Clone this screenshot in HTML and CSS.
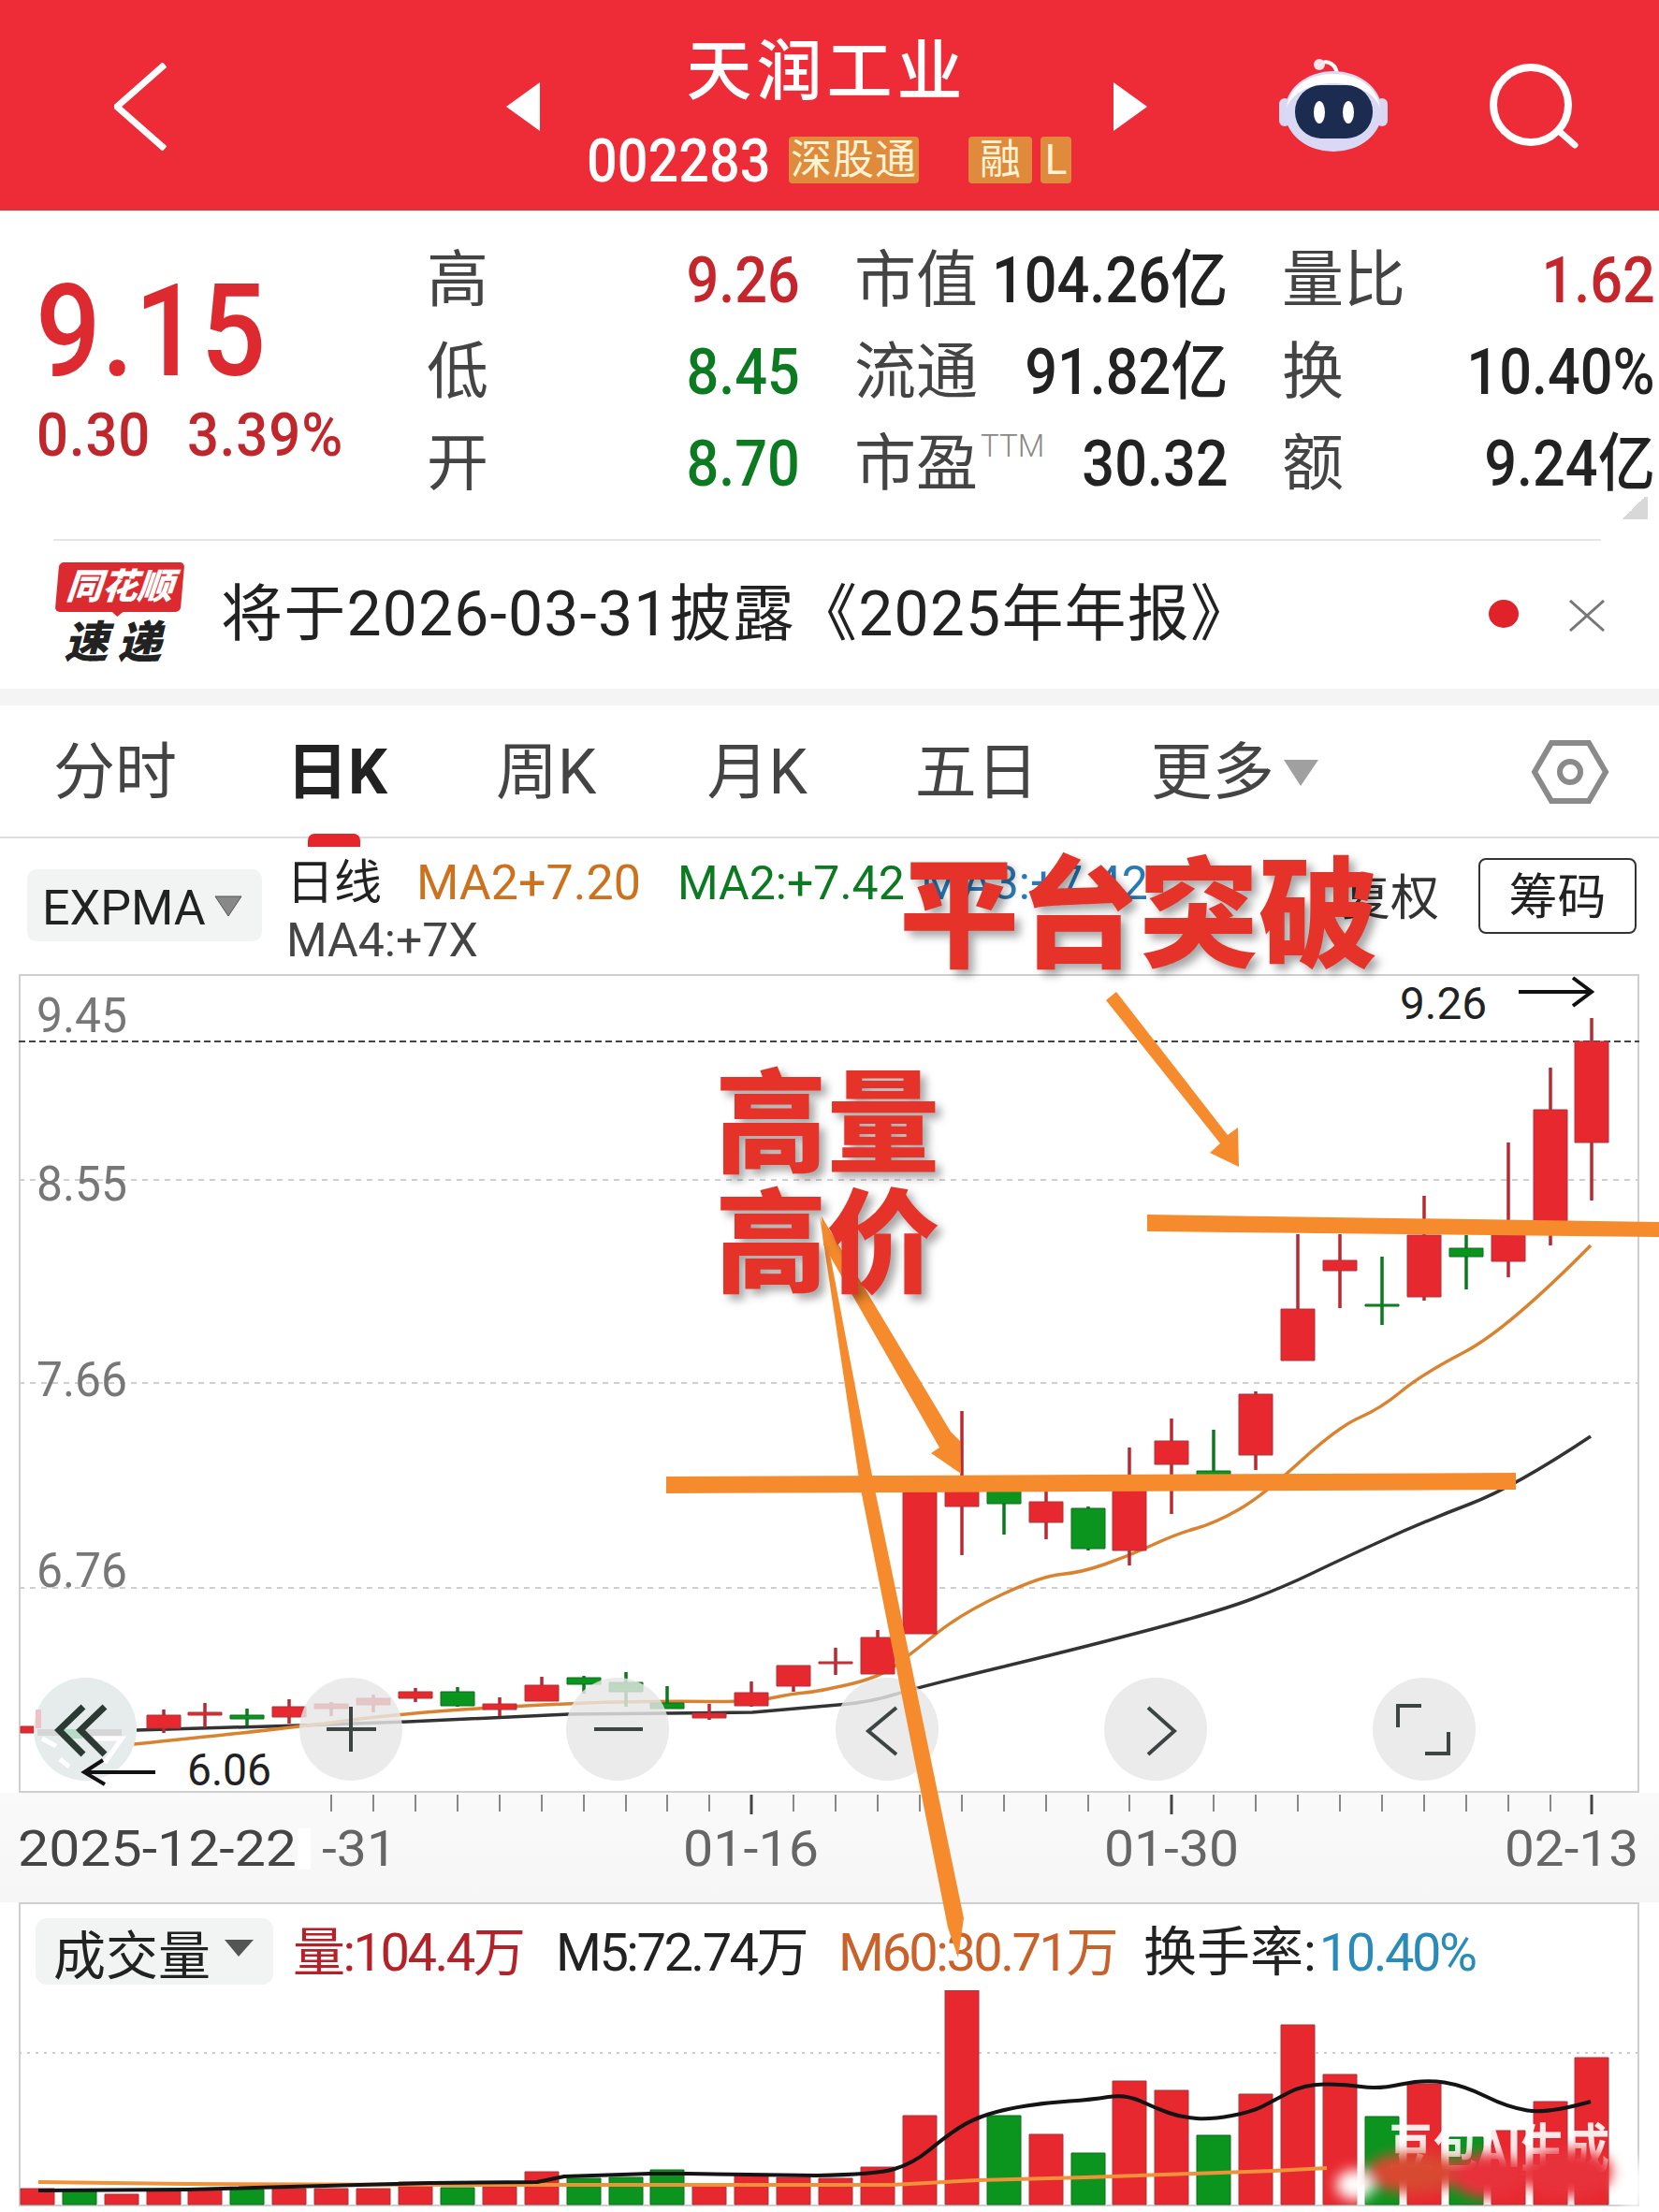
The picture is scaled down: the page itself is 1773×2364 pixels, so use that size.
FILE: index.html
```html
<!DOCTYPE html>
<html lang="zh-CN">
<head>
<meta charset="utf-8">
<title>天润工业</title>
<link rel="stylesheet" href="styles.css">
</head>
<body>
<div class="page">
  <header class="top">
    <svg class="ic-back" viewBox="122 66 56 94"><path d="M176 68 125 113 176 158" class="ws"/></svg>
    <svg class="ic-tri" viewBox="0 0 36 52"><path d="M36 0V52L0 26z" class="wf"/></svg>
    <div class="top-mid">
      <div class="title">天润工业</div>
      <div class="code-row">
        <span class="code">002283</span>
        <span class="tag tag-sgt">深股通</span>
        <span class="tag tag-rong">融</span>
        <span class="tag tag-l">L</span>
      </div>
    </div>
    <svg class="ic-tri" viewBox="0 0 36 52"><path d="M0 0V52L36 26z" class="wf"/></svg>
    <svg class="ic-robot" viewBox="1366 60 122 108">
      <path d="M1411 72C1414 64 1428 66 1430 80" class="ant"/>
      <circle cx="1411" cy="70" r="6" class="ant-b"/>
      <rect x="1368" y="106" width="12" height="30" rx="6" class="rb-ear"/>
      <rect x="1472" y="106" width="12" height="30" rx="6" class="rb-ear"/>
      <ellipse cx="1426" cy="120" rx="52" ry="43" class="rb-out"/>
      <path d="M1376 116C1380 92 1402 80 1426 80C1450 80 1472 92 1476 116C1470 100 1450 90 1426 90C1402 90 1382 100 1376 116z" class="wf"/>
      <rect x="1385" y="92" width="83" height="57" rx="28" class="rb-visor"/>
      <ellipse cx="1411" cy="121" rx="6" ry="12" class="wf"/>
      <ellipse cx="1442" cy="121" rx="6" ry="12" class="wf"/>
    </svg>
    <svg class="ic-search" viewBox="1588 68 100 96"><circle cx="1637" cy="115" r="40" class="ws2"/><path d="M1667 143 1684 158" class="ws3"/></svg>
  </header>

  <section class="quote">
    <div class="price">
      <div class="price-now">9.15</div>
      <div class="price-chg"><span>0.30</span><span>3.39%</span></div>
    </div>
    <div class="stats">
      <div class="cell"><span class="lbl">高</span><span class="val red">9.26</span></div>
      <div class="cell"><span class="lbl">市值</span><span class="val">104.26亿</span></div>
      <div class="cell"><span class="lbl">量比</span><span class="val red">1.62</span></div>
      <div class="cell"><span class="lbl">低</span><span class="val grn">8.45</span></div>
      <div class="cell"><span class="lbl">流通</span><span class="val">91.82亿</span></div>
      <div class="cell"><span class="lbl">换</span><span class="val">10.40%</span></div>
      <div class="cell"><span class="lbl">开</span><span class="val grn">8.70</span></div>
      <div class="cell"><span class="lbl">市盈<sup class="ttm">TTM</sup></span><span class="val">30.32</span></div>
      <div class="cell"><span class="lbl">额</span><span class="val">9.24亿</span></div>
    </div>
    <span class="corner"></span>
  </section>

  <div class="news-wrap">
    <div class="news">
      <div class="logo">
        <div class="logo-tag"><span class="logo-tag-t">同花顺</span></div>
        <div class="logo-sub">速递</div>
      </div>
      <div class="news-text">将于2026-03-31披露《2025年年报》</div>
      <span class="news-dot"></span>
      <svg class="news-x" viewBox="0 0 40 34"><path d="M2 1 38 33M38 1 2 33" class="gs"/></svg>
    </div>
  </div>
  <div class="sep"></div>

  <nav class="tabs">
    <span class="tab t1">分时</span>
    <span class="tab t2 on">日K</span>
    <span class="tab t3">周K</span>
    <span class="tab t4">月K</span>
    <span class="tab t5">五日</span>
    <span class="tab t6">更多</span>
    <svg class="tab-tri" viewBox="0 0 37 28"><path d="M0 0H37L18 28z" class="graytri"/></svg>
    <svg class="hex" viewBox="1636 790 84 70"><path d="M1640 825 1658 794H1698L1716 825 1698 856H1658z" class="hexs"/><circle cx="1678" cy="825" r="11" class="hexs"/></svg>
  </nav>

  <div class="ind">
    <div class="expma"><span class="expma-t">EXPMA</span><svg class="expma-tri" viewBox="0 0 32 25"><path d="M2 2H30L16 23z" class="tri2"/></svg></div>
    <div class="legend">
      <div class="leg-line">
        <span class="leg-a">日线</span>
        <span class="leg-b">MA2+7.20</span>
        <span class="leg-c">MA2:+7.42</span>
        <span class="leg-d">MA3:+7.42</span>
      </div>
      <div class="leg-line2">MA4:+7X</div>
    </div>
    <span class="fq">复权</span>
    <span class="chip">筹码</span>
  </div>

  <div class="chart">
    <svg class="chart-svg" viewBox="20 1041 1732 875">
      <path d="M20 1113H1752" class="grid-d"/>
      <path d="M20 1261H1752M20 1478H1752M20 1697H1752" class="grid-l"/>
      <path d="M146 1849 321 1844 436 1840 608 1832 804 1830Q873 1824 901.5 1821.5Q930 1819 956 1811Q982 1803 1071 1781.5Q1160 1760 1231.5 1741Q1303 1722 1337.5 1709Q1372 1696 1401 1682Q1430 1668 1476 1647Q1522 1626 1570.5 1607.5Q1619 1589 1700 1535" class="ma-k"/>
      <path d="M143 1864Q310 1847 370 1839Q430 1831 519 1825.5Q608 1820 660 1819Q712 1818 758 1818.5Q804 1819 825.5 1814.5Q847 1810 860 1809Q873 1808 906 1800.5Q939 1793 956 1780.5Q973 1768 1000.5 1746Q1028 1724 1071 1704Q1114 1684 1134 1682.5Q1154 1681 1180 1672Q1206 1663 1232 1651Q1258 1639 1278 1633.5Q1298 1628 1323.5 1613.5Q1349 1599 1389.5 1562Q1430 1525 1453 1515Q1476 1505 1497.5 1487Q1519 1469 1565 1445Q1611 1421 1700 1331" class="ma-o"/>

      <path class="wick-r" d="M175 1827V1852M219 1820V1846M309 1816V1842M354 1819V1834M399 1811V1830M444 1804V1819M534 1814V1834M579 1792V1818M758 1821V1838M803 1797V1824M848 1780V1808M893 1761V1790M938 1742V1789M1028 1508V1662M1118 1592V1645M1207 1547V1673M1252 1516V1618M1342 1487V1571M1387 1319V1454M1432 1319V1398M1522 1278V1390M1612 1221V1365M1657 1141V1331M1701 1088V1283"/>
      <path class="wick-g" d="M264 1826V1844M489 1803V1824M624 1791V1810M669 1787V1824M713 1802V1826M1073 1580V1640M1163 1610V1657M1297 1528V1579M1477 1343V1416M1567 1320V1378"/>
      <path class="body-r" d="M157 1833h36v14h-36zM201 1830h36v3h-36zM291 1824h36v11h-36zM336 1821h36v5h-36zM381 1815h36v7h-36zM426 1808h36v7h-36zM516 1821h36v6h-36zM561 1801h36v17h-36zM740 1831h36v5h-36zM785 1809h36v14h-36zM830 1780h36v22h-36zM875 1776h36v2h-36zM920 1750h36v39h-36zM965 1590h36v156h-36zM1010 1580h36v30h-36zM1100 1605h36v22h-36zM1189 1590h36v67h-36zM1234 1540h36v25h-36zM1324 1490h36v65h-36zM1369 1399h36v55h-36zM1414 1347h36v11h-36zM1504 1320h36v66h-36zM1594 1320h36v28h-36zM1639 1186h36v124h-36zM1683 1113h36v108h-36zM22 1845h14v7H22z"/>
      <path class="body-g" d="M246 1833h36v4h-36zM471 1808h36v15h-36zM606 1793h36v7h-36zM651 1798h36v10h-36zM695 1820h36v6h-36zM1055 1582h36v25h-36zM1145 1612h36v43h-36zM1279 1572h36v7h-36zM1459 1394h36v2h-36zM1549 1334h36v9h-36z"/>

      <circle cx="91" cy="1848" r="55" class="fab fab-l"/>
      <circle cx="375" cy="1848" r="55" class="fab"/>
      <circle cx="660" cy="1848" r="55" class="fab"/>
      <circle cx="948" cy="1848" r="55" class="fab"/>
      <circle cx="1235" cy="1848" r="55" class="fab"/>
      <circle cx="1522" cy="1848" r="55" class="fab"/>
      <path d="M38 1827h6v20h-6z" class="ghost-r"/>
      <path d="M40 1848h90v7H40z" class="ghost-k"/>
      <path d="M66 1848h22v10H66z" class="ghost-g"/>
      <path d="M45 1858 60 1866M64 1880 74 1888M100 1858H130L112 1884" class="ghost-l"/>
      <path d="M89 1824 63 1849 89 1875M112 1824 86 1849 112 1875" class="fab-c"/>
      <path d="M349 1848H402M375 1824V1872" class="fab-i"/>
      <path d="M635 1848H687" class="fab-i"/>
      <path d="M958 1825 928 1850 958 1875" class="fab-i"/>
      <path d="M1227 1825 1255 1850 1227 1875" class="fab-i"/>
      <path d="M1519 1823H1494V1846M1523 1874H1548V1851" class="fab-i"/>

      <text x="39" y="1103" textLength="97" lengthAdjust="spacingAndGlyphs" class="ax">9.45</text>
      <text x="39" y="1283" textLength="97" lengthAdjust="spacingAndGlyphs" class="ax">8.55</text>
      <text x="39" y="1492" textLength="97" lengthAdjust="spacingAndGlyphs" class="ax">7.66</text>
      <text x="39" y="1696" textLength="97" lengthAdjust="spacingAndGlyphs" class="ax">6.76</text>
      <text x="1496" y="1089" textLength="93" lengthAdjust="spacingAndGlyphs" class="mk">9.26</text>
      <text x="200" y="1908" textLength="90" lengthAdjust="spacingAndGlyphs" class="mk">6.06</text>
      <path d="M1623 1060H1700M1681 1045 1701 1060 1681 1075" class="arr"/>
      <path d="M166 1894H90M110 1881 90 1894 112 1907" class="arr"/>
    </svg>
  </div>

  <div class="axis">
    <svg class="axis-svg" viewBox="0 1916 1773 117">
      <path class="tick" d="M354 1918V1936M399 1918V1936M444 1918V1936M489 1918V1936M534 1918V1936M579 1918V1936M624 1918V1936M669 1918V1936M713 1918V1936M758 1918V1936M848 1918V1936M893 1918V1936M938 1918V1936M983 1918V1936M1028 1918V1936M1073 1918V1936M1118 1918V1936M1163 1918V1936M1207 1918V1936M1297 1918V1936M1342 1918V1936M1387 1918V1936M1432 1918V1936M1477 1918V1936M1522 1918V1936M1567 1918V1936M1612 1918V1936M1657 1918V1936"/>
      <path class="tick-m" d="M803 1918V1939M1252 1918V1939M1701 1918V1939"/>
      <rect x="318" y="1954" width="14" height="44" class="axis-mask"/>
      <text x="19" y="1994" textLength="298" lengthAdjust="spacingAndGlyphs" class="dt dt-d">2025-12-22</text>
      <text x="344" y="1994" textLength="80" lengthAdjust="spacingAndGlyphs" class="dt">-31</text>
      <text x="730" y="1994" textLength="145" lengthAdjust="spacingAndGlyphs" class="dt">01-16</text>
      <text x="1180" y="1994" textLength="144" lengthAdjust="spacingAndGlyphs" class="dt">01-30</text>
      <text x="1608" y="1994" textLength="143" lengthAdjust="spacingAndGlyphs" class="dt">02-13</text>
    </svg>
  </div>

  <div class="vol">
    <div class="vol-head">
      <div class="vol-sel"><span>成交量</span><svg class="vol-tri" viewBox="0 0 31 18"><path d="M0 0H31L15 18z" class="tri3"/></svg></div>
      <span class="vi v-r">量:104.4万</span>
      <span class="vi v-k">M5:72.74万</span>
      <span class="vi v-o">M60:30.71万</span>
      <span class="vi v-k v-h"><span class="v-hl">换手率:</span><span class="v-b">10.40%</span></span>
    </div>
    <svg class="vol-svg" viewBox="20 2127 1732 231">
      <defs><filter id="blur" x="-20%" y="-40%" width="140%" height="180%"><feGaussianBlur stdDeviation="7"/></filter></defs>
      <path d="M20 2194H1752" class="grid-dot"/>
      <path class="body-r" d="M22 2339h36v17H22zM112 2345h36v11h-36zM157 2342h36v14h-36zM201 2339h36v17h-36zM291 2339h36v17h-36zM336 2339h36v17h-36zM381 2339h36v17h-36zM426 2332h36v24h-36zM516 2337h36v19h-36zM561 2321h36v35h-36zM740 2336h36v20h-36zM785 2324h36v32h-36zM830 2327h36v29h-36zM875 2328h36v28h-36zM920 2316h36v40h-36zM965 2261h36v95h-36zM1010 2127h36v229h-36zM1100 2281h36v75h-36zM1189 2224h36v132h-36zM1234 2234h36v122h-36zM1324 2238h36v118h-36zM1369 2164h36v192h-36zM1414 2217h36v139h-36zM1504 2227h36v129h-36zM1594 2277h36v79h-36zM1639 2246h36v110h-36zM1683 2199h36v157h-36z"/>
      <path class="body-g" d="M67 2342h36v14H67zM246 2340h36v16h-36zM471 2338h36v18h-36zM606 2328h36v28h-36zM651 2327h36v29h-36zM695 2319h36v37h-36zM1055 2261h36v95h-36zM1145 2301h36v55h-36zM1279 2282h36v74h-36zM1459 2262h36v94h-36zM1549 2284h36v72h-36z"/>
      <path d="M41 2332 201 2334 517 2335 900 2335 953 2335 1045 2330 1160 2327 1275 2323 1361 2320 1418 2317" class="v-ma-o"/>
      <path d="M41 2341 201 2340 459 2333 574 2332 603 2326 695 2323 735 2323 873 2325Q936 2324 956 2318Q976 2312 993.5 2297.5Q1011 2283 1025 2274Q1039 2265 1056.5 2259.5Q1074 2254 1097 2250.5Q1120 2247 1143 2245.5Q1166 2244 1184.5 2241Q1203 2238 1219 2245.5Q1235 2253 1249 2258Q1263 2263 1279 2264Q1295 2265 1316.5 2261Q1338 2257 1349.5 2251Q1361 2245 1377 2236.5Q1393 2228 1414.5 2227.5Q1436 2227 1454.5 2230Q1473 2233 1497.5 2227.5Q1522 2222 1543.5 2225.5Q1565 2229 1588 2240.5Q1611 2252 1632.5 2255.5Q1654 2259 1700 2246" class="v-ma-k"/>
      <text x="1484" y="2316" textLength="236" lengthAdjust="spacingAndGlyphs" class="wm">豆包AI生成</text>
      <g filter="url(#blur)">
        <ellipse cx="1448" cy="2335" rx="20" ry="16" class="halo"/>
        <ellipse cx="1510" cy="2322" rx="50" ry="22" class="blob-g"/>
        <ellipse cx="1590" cy="2325" rx="40" ry="24" class="blob-r"/>
        <ellipse cx="1675" cy="2322" rx="50" ry="26" class="blob-r"/>
        <ellipse cx="1745" cy="2335" rx="14" ry="28" class="halo"/>
      </g>
    </svg>
  </div>

  <svg class="marks" viewBox="0 0 1773 2364">
    <path class="mark" d="M1226 1298 1773 1306V1322L1226 1316z"/>
    <path class="mark" d="M712 1578 1620 1574V1592L712 1596z"/>
    <path class="mark" d="M1182 1069 1193 1060 1312 1213 1323 1205 1324 1247 1293 1232 1304 1222z"/>
    <path class="mark" d="M878 1300 1016 1530 1026 1540 1027 1575 995 1553 1004 1547 880 1330z"/>
    <path class="mark" d="M876 1300 919 1587 1013 2060 1024 2092 1030 2050 934 1587 885 1330z"/>
  </svg>
  <div class="note note-a">平台突破</div>
  <div class="note note-b">高量<br>高价</div>
</div>
</body>
</html>
```

FILE: styles.css
```css
* { box-sizing: border-box; }
html, body { margin: 0; padding: 0; background: #fff; }
body { font-family: Roboto, "Noto Sans CJK SC", sans-serif; color: #222; }
.page { position: relative; width: 1773px; height: 2364px; overflow: hidden; }
svg { display: block; flex: none; }

/* header */
.top { height: 225px; background: #ee2c38; display: flex; align-items: center; color: #fff; box-shadow: inset 0 -2px 0 #d33; }
.ws { fill: none; stroke: #fff; stroke-width: 7; }
.ws2 { fill: none; stroke: #fff; stroke-width: 8; }
.ws3 { fill: none; stroke: #fff; stroke-width: 7; stroke-linecap: round; }
.wf { fill: #fff; }
.ic-back { width: 56px; height: 94px; margin-left: 122px; margin-right: 363px; position: relative; top: 1px; }
.ic-tri { width: 36px; height: 52px; position: relative; top: 1px; }
.top-mid { width: 613px; height: 225px; padding-top: 37px; }
.title { text-align: center; font-size: 70px; line-height: 80px; font-weight: 500; letter-spacing: 5px; }
.code-row { display: flex; align-items: center; margin-top: 29px; margin-left: 50px; height: 50px; }
.code { display: inline-block; font-size: 64px; height: 50px; line-height: 54px; font-weight: 500; transform: scaleX(.9); transform-origin: left; width: 216px; }
.tag { background: #e08a3c; color: #fff3d6; font-size: 44px; line-height: 50px; border-radius: 4px; height: 50px; text-align: center; overflow: hidden; }
.tag-sgt { width: 139px; font-size: 44px; letter-spacing: 1px; }
.tag-rong { width: 68px; margin-left: 53px; }
.tag-l { width: 33px; margin-left: 9px; }
.ic-robot { width: 122px; height: 108px; margin-left: 139px; }
.ant { fill: none; stroke: #fff; stroke-width: 4; }
.ant-b { fill: #f6e6ea; }
.rb-ear { fill: #d8d8f2; }
.rb-out { fill: #d9d9f6; }
.rb-visor { fill: #1c2b50; }
.ic-search { width: 100px; height: 96px; margin-left: 100px; }

/* quote */
.quote { position: relative; height: 351px; padding-top: 26px; display: flex; }
.price { width: 456px; padding-left: 38px; padding-top: 45px; }
.price-now { font-size: 138px; line-height: 116px; font-weight: 500; transform: scaleX(.89); transform-origin: left; letter-spacing: 1px; color: #dc2a30; }
.price-chg { display: flex; gap: 42px; font-size: 65px; line-height: 70px; margin-top: 18px; margin-left: 1px; font-weight: 500; letter-spacing: 1px; transform: scaleX(.92); transform-origin: left; color: #c0272d; white-space: nowrap; }
.stats { display: grid; grid-template-columns: repeat(3, 399px); grid-auto-rows: 98px; column-gap: 58px; }
.cell { display: flex; justify-content: space-between; align-items: center; }
.lbl { font-size: 66px; color: #444; line-height: 80px; white-space: nowrap; }
.val { font-size: 68px; line-height: 80px; margin-left: -30px; color: #222; font-weight: 500; white-space: nowrap; transform: scaleX(.9); transform-origin: right; }
.red { color: #c4262c; }
.grn { color: #0b7a20; }
.ttm { font-size: 33px; color: #888; vertical-align: 30px; line-height: 0; font-weight: 300; margin-left: 3px; }
.corner { position: absolute; right: 12px; top: 306px; width: 30px; height: 24px; background: linear-gradient(135deg, transparent 50%, #d8d8d8 50%); }

/* news */
.news-wrap { padding: 0 62px 0 57px; }
.news { height: 160px; border-top: 2px solid #e6e6e6; display: flex; align-items: center; position: relative; }
.logo { width: 141px; display: flex; flex-direction: column; align-items: center; }
.logo-tag { position: relative; width: 134px; height: 53px; background: #dc2b30; border-radius: 5px; color: #fff; text-align: center; transform: skewX(-5deg); }
.logo-tag::after { content: ""; position: absolute; left: 60px; bottom: -5px; width: 14px; height: 6px; background: #dc2b30; clip-path: polygon(0 0, 100% 0, 50% 100%); }
.logo-tag-t { font-size: 38px; line-height: 53px; font-weight: 900; font-style: italic; }
.logo-sub { font-size: 47px; line-height: 54px; font-weight: 900; font-style: italic; color: #222; margin-top: 6px; letter-spacing: 10px; margin-left: -4px; }
.news-text { margin-left: 38px; font-size: 66px; line-height: 1; color: #222; white-space: nowrap; letter-spacing: 1.2px; }
.news-dot { width: 32px; height: 30px; border-radius: 50%; background: #e0222a; position: absolute; left: 1534px; top: 63px; }
.news-x { width: 40px; height: 34px; position: absolute; left: 1619px; top: 63px; }
.gs { fill: none; stroke: #777; stroke-width: 3; }
.sep { height: 18px; background: #f4f4f4; }

/* tabs */
.tabs { position: relative; height: 142px; border-bottom: 2px solid #dedede; display: flex; align-items: center; padding-left: 57px; padding-top: 3px; }
.tab { font-size: 66px; line-height: 1; color: #444; position: relative; white-space: nowrap; }
.t2 { margin-left: 117px; }
.t3 { margin-left: 116px; }
.t4 { margin-left: 118px; }
.t5 { margin-left: 115px; }
.t6 { margin-left: 120px; }
.on { font-weight: 700; color: #222; }
.on::after { content: ""; position: absolute; left: 23px; bottom: -46px; width: 56px; height: 14px; background: #e5252a; border-radius: 7px 7px 0 0; }
.tab-tri { width: 37px; height: 28px; margin-left: 10px; }
.graytri { fill: #a0a0a0; }
.hex { width: 84px; height: 70px; position: absolute; left: 1636px; top: 36px; }
.hexs { fill: none; stroke: #8a8a8a; stroke-width: 6; }

/* indicators */
.ind { height: 145px; display: flex; align-items: flex-start; padding-left: 29px; position: relative; }
.expma { margin-top: 33px; width: 251px; height: 77px; background: #f2f3f3; border-radius: 10px; display: flex; align-items: center; padding-left: 16px; font-size: 52px; color: #222; }
.expma-t { line-height: 60px; padding-top: 6px; }
.expma-tri { width: 32px; height: 25px; margin-left: 8px; margin-top: 2px; }
.tri2 { fill: #888; stroke: #555; stroke-width: 1; }
.legend { margin-left: 26px; padding-top: 18px; }
.leg-line { display: flex; font-size: 50px; line-height: 60px; white-space: nowrap; height: 60px; }
.leg-a { width: 139px; color: #222; font-size: 51px; }
.leg-b { width: 279px; color: #cc721e; font-size: 52px; }
.leg-c { width: 260px; color: #0b7a20; }
.leg-d { color: #2a7ab8; }
.leg-line2 { font-size: 50px; line-height: 62px; color: #444; }
.fq { margin-left: auto; margin-right: 42px; margin-top: 35px; font-size: 52px; line-height: 60px; color: #333; }
.chip { margin-top: 21px; margin-right: 24px; width: 169px; height: 81px; border: 2px solid #333; border-radius: 8px; text-align: center; font-size: 52px; line-height: 81px; color: #222; }

/* chart */
.chart { margin-left: 20px; width: 1732px; height: 875px; box-shadow: inset 0 0 0 2px #cfcfcf; }
.chart-svg { width: 1732px; height: 875px; }
.grid-d { stroke: #444; stroke-width: 2; stroke-dasharray: 7 4; fill: none; }
.grid-l { stroke: #cfcfcf; stroke-width: 2; stroke-dasharray: 6 6; fill: none; }
.ma-k { fill: none; stroke: #333; stroke-width: 3.5; stroke-linejoin: round; }
.ma-o { fill: none; stroke: #d98330; stroke-width: 3.5; stroke-linejoin: round; }
.wick-r { stroke: #b92a30; stroke-width: 3.5; fill: none; }
.wick-g { stroke: #0a7a1f; stroke-width: 3.5; fill: none; }
.body-r { fill: #e8282f; stroke: #a8353a; stroke-width: 1; }
.body-g { fill: #0b951e; stroke: #0a6e1c; stroke-width: 1; }
.fab { fill: rgba(230, 230, 230, .82); }
.fab-l { fill: rgba(226, 232, 232, .85); }
.ghost-r { fill: #ecc4c8; }
.ghost-k { fill: #d6d6d6; }
.ghost-g { fill: #b5dcc8; }
.ghost-l { fill: none; stroke: #fff; stroke-width: 5; }
.fab-c { fill: none; stroke: #2c3a34; stroke-width: 7; }
.fab-i { fill: none; stroke: #3d4444; stroke-width: 4; }
.ax { font-size: 52px; fill: #777; font-weight: 400; }
.mk { font-size: 48px; fill: #222; }
.arr { fill: none; stroke: #111; stroke-width: 4; }

/* x axis */
.axis { height: 117px; background: linear-gradient(#fafafa, #f6f6f6); }
.axis-svg { width: 1773px; height: 117px; }
.axis-mask { fill: #fff; }
.tick { stroke: #888; stroke-width: 2; }
.tick-m { stroke: #444; stroke-width: 3; }
.dt { font-size: 54px; fill: #666; }
.dt-d { fill: #444; }

/* volume */
.vol { margin-left: 20px; width: 1732px; height: 325px; box-shadow: inset 0 0 0 2px #cfcfcf; }
.vol-head { height: 94px; padding-top: 17px; padding-left: 18px; display: flex; align-items: flex-start; }
.vol-sel { width: 254px; height: 71px; background: #f2f3f3; border-radius: 12px; display: flex; align-items: center; padding-left: 19px; font-size: 56px; color: #222; }
.vol-tri { width: 31px; height: 18px; margin-left: 15px; margin-top: -8px; }
.tri3 { fill: #555; }
.vi { font-size: 56px; line-height: 68px; letter-spacing: -2.5px; white-space: nowrap; margin-top: 3px; }
.v-r { color: #b22228; margin-left: 21px; width: 247px; }
.v-k { color: #222; }
.v-r + .v-k { margin-left: 34px; width: 267px; }
.v-o { color: #c8622a; margin-left: 35px; width: 296px; }
.v-h { margin-left: 30px; }
.v-hl { font-size: 57px; letter-spacing: 0; }
.v-b { color: #2a8bb8; margin-left: 3px; }
.vol-svg { width: 1732px; height: 231px; }
.grid-dot { stroke: #ccc; stroke-width: 2; stroke-dasharray: 3 6; fill: none; }
.v-ma-k { fill: none; stroke: #141414; stroke-width: 4; stroke-linejoin: round; }
.v-ma-o { fill: none; stroke: #f0923a; stroke-width: 4; stroke-linejoin: round; }
.wm { font-size: 56px; fill: #fff; font-weight: 700; opacity: .9; }
.blob-r { fill: #e8303a; }
.blob-g { fill: #d84a30; }
.halo { fill: #fff; }

/* hand-drawn annotations over the page */
.marks { position: absolute; left: 0; top: 0; width: 1773px; height: 2364px; pointer-events: none; }
.mark { fill: #f58b2d; }
.note { position: absolute; font-weight: 900; color: #e5332a; white-space: nowrap; text-shadow: 6px 6px 10px rgba(0, 0, 0, .35); }
.note-a { left: 961px; top: 892px; font-size: 128px; line-height: 176px; }
.note-b { left: 764px; top: 1139px; font-size: 120px; line-height: 128px; }
```
